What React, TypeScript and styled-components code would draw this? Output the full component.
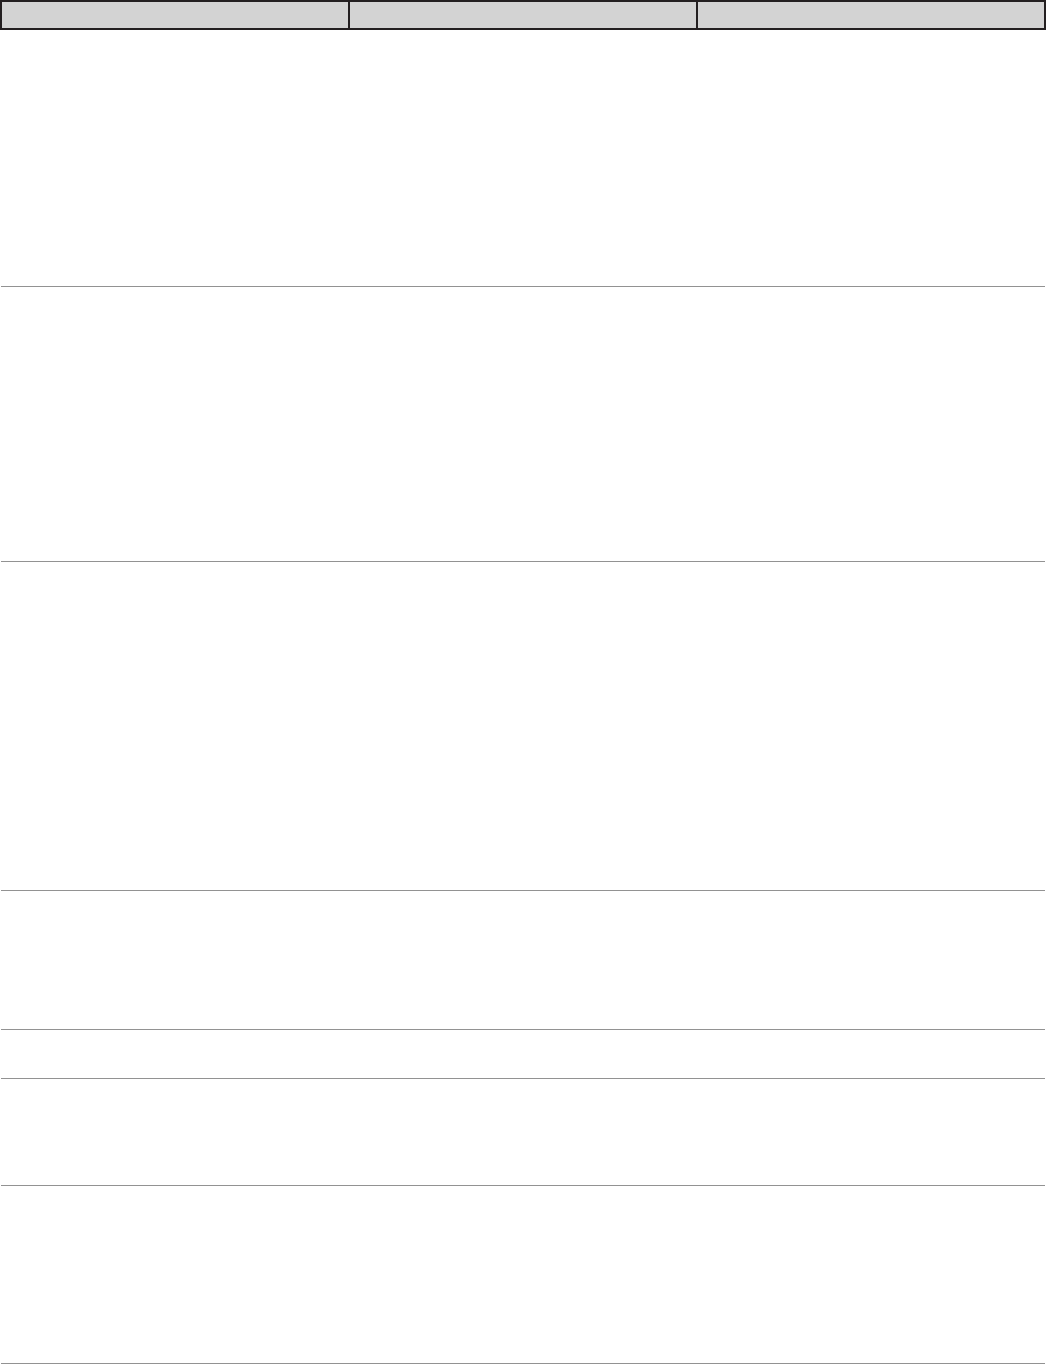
import React from "react";
import styled, { createGlobalStyle } from "styled-components";

const GlobalStyle = createGlobalStyle`
  html, body {
    margin: 0;
    padding: 0;
    background: #ffffff;
    font-family: "Liberation Sans", Arial, sans-serif;
  }
`;

const Sheet = styled.div`
  width: 1046px;
  display: flex;
  flex-direction: column;
`;

const HeaderRow = styled.div`
  box-sizing: border-box;
  height: 30px;
  display: grid;
  grid-template-columns: repeat(3, 1fr);
  border: 2px solid #231f20;
  background: #231f20;
  column-gap: 2px;
`;

const HeaderCell = styled.div`
  background: #d3d3d3;
  font-size: 13px;
  color: #231f20;
`;

const Body = styled.div`
  margin: 0 1px;
  display: flex;
  flex-direction: column;
`;

const Row = styled.div<{ $height: number }>`
  box-sizing: border-box;
  height: ${(p) => p.$height}px;
  display: grid;
  grid-template-columns: repeat(3, 1fr);
  border-bottom: 1px solid #929292;
`;

const Cell = styled.div`
  font-size: 13px;
`;

// row heights measured from the reference, including the 1px rule
const rows = [257, 275, 329, 139, 49, 107, 178];

export default function App() {
  return (
    <>
      <GlobalStyle />
      <Sheet>
        <HeaderRow>
          <HeaderCell />
          <HeaderCell />
          <HeaderCell />
        </HeaderRow>
        <Body>
          {rows.map((h, i) => (
            <Row key={i} $height={h}>
              <Cell />
              <Cell />
              <Cell />
            </Row>
          ))}
        </Body>
      </Sheet>
    </>
  );
}
